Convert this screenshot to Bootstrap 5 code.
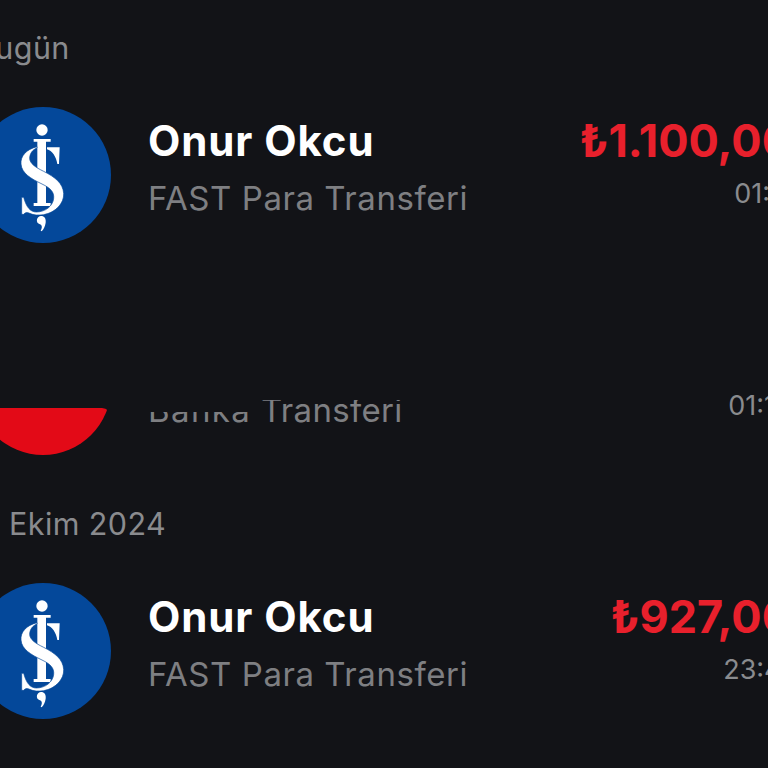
<!DOCTYPE html>
<html lang="tr">
<head>
    <meta charset="UTF-8">
    <meta name="viewport" content="width=device-width, initial-scale=1.0">
    <title>Hesap Hareketleri</title>
    <link rel="stylesheet" href="https://cdn.jsdelivr.net/npm/bootstrap@5.3.0/dist/css/bootstrap.min.css">
    <style>
        body { background: #121317; font-family: "Inter", "Liberation Sans", sans-serif; }
        .screen { width: 768px; height: 768px; overflow: hidden; }
        .feed { width: 817px; margin-left: -25px; padding-top: 28px; }
        .day-title { height: 40px; line-height: 40px; margin-bottom: 39px; font-size: 30.5px; letter-spacing: .4px; color: #8a8b8e; white-space: nowrap; }
        .day-num { margin-left: -14px; margin-right: 7px; }
        .tx-row { height: 136px; margin-bottom: 76px; }
        .tx-row.tx-last { margin-bottom: 49px; }
        .tx-logo { width: 136px; height: 136px; flex: none; }
        .tx-logo svg { display: block; }
        .tx-logo-cut { overflow: hidden; padding-top: 89px; }
        .cut-inner { height: 47px; overflow: hidden; border-top-right-radius: 9px; }
        .cut-inner svg { margin-top: -89px; }
        .tx-body { padding-left: 37px; padding-top: 10px; }
        .tx-name { height: 48px; line-height: 48px; font-size: 42px; font-weight: 700; letter-spacing: .9px; color: #fff; white-space: nowrap; }
        .tx-sub { margin-top: 13px; height: 40px; line-height: 40px; font-size: 33px; letter-spacing: .55px; color: #7e7f82; white-space: nowrap; }
        .tx-sub-only { margin-top: 61px; }
        .tx-side { padding-top: 10px; white-space: nowrap; }
        .tx-amount { height: 48px; line-height: 48px; font-size: 45px; font-weight: 700; color: #e8202c; }
        .tx-time { margin-top: 12px; height: 34px; line-height: 34px; font-size: 27px; color: #8a8b8e; }
        .tx-time-only { margin-top: 60px; }
        .clip-low { display: inline-block; letter-spacing: 1.4px; clip-path: inset(22px 0 0 0); }
        .clip-high { display: inline-block; letter-spacing: .3px; clip-path: inset(10px 0 0 0); }
    </style>
</head>
<body>
    <div class="screen">
        <div class="feed">
            <div class="day-title">Bugün</div>

            <div class="tx-row d-flex">
                <div class="tx-logo">
                    <svg width="136" height="136" viewBox="-76 51 408 408"><use href="#isbank"/></svg>
                </div>
                <div class="tx-body flex-grow-1">
                    <div class="tx-name">Onur Okcu</div>
                    <div class="tx-sub">FAST Para Transferi</div>
                </div>
                <div class="tx-side text-end">
                    <div class="tx-amount">₺1.100,00</div>
                    <div class="tx-time">01:11</div>
                </div>
            </div>

            <div class="tx-row tx-last d-flex">
                <div class="tx-logo tx-logo-cut">
                    <div class="cut-inner">
                        <svg width="136" height="136" viewBox="0 0 136 136"><circle cx="68" cy="68" r="68" fill="#e30a17"/></svg>
                    </div>
                </div>
                <div class="tx-body flex-grow-1">
                    <div class="tx-sub tx-sub-only"><span class="clip-low">Banka</span> <span class="clip-high">Transferi</span></div>
                </div>
                <div class="tx-side text-end">
                    <div class="tx-time tx-time-only">01:10</div>
                </div>
            </div>

            <div class="day-title"><span class="day-num">31</span> Ekim 2024</div>

            <div class="tx-row d-flex">
                <div class="tx-logo">
                    <svg width="136" height="136" viewBox="-76 51 408 408"><use href="#isbank"/></svg>
                </div>
                <div class="tx-body flex-grow-1">
                    <div class="tx-name">Onur Okcu</div>
                    <div class="tx-sub">FAST Para Transferi</div>
                </div>
                <div class="tx-side text-end">
                    <div class="tx-amount">₺927,00</div>
                    <div class="tx-time">23:41</div>
                </div>
            </div>
        </div>
    </div>

    <svg width="0" height="0" class="d-block">
        <defs>
            <g id="isbank">
                <circle cx="128" cy="255" r="204" fill="#04489a"/>
                <g fill="#fff">
                    <circle cx="125" cy="120" r="17"/>
                    <path d="M100 147H151V155H137V339H151V348H100V339H111V155H100Z"/>
                    <path d="M140 172H178L176 222H171C168 200 155 182 140 178Z"/>
                    <path d="M110 170C78 178 60 198 62 222C64 250 92 266 125 282C150 294 162 306 160 325C158 348 135 366 108 366C90 366 78 352 70 322H64V373H70C74 368 80 366 88 370C100 376 115 376 130 374C165 368 192 340 190 310C188 280 165 262 130 244C105 232 88 220 88 205C88 190 98 178 110 174Z" stroke="#04489a" stroke-width="2"/>
                    <path d="M122 378C132 378 138 386 136 398C134 410 130 418 124 424L121 422C125 414 126 408 122 404C112 402 108 396 110 388C112 382 116 378 122 378Z"/>
                </g>
            </g>
        </defs>
    </svg>

    <script src="https://cdn.jsdelivr.net/npm/bootstrap@5.3.0/dist/js/bootstrap.bundle.min.js"></script>
</body>
</html>
